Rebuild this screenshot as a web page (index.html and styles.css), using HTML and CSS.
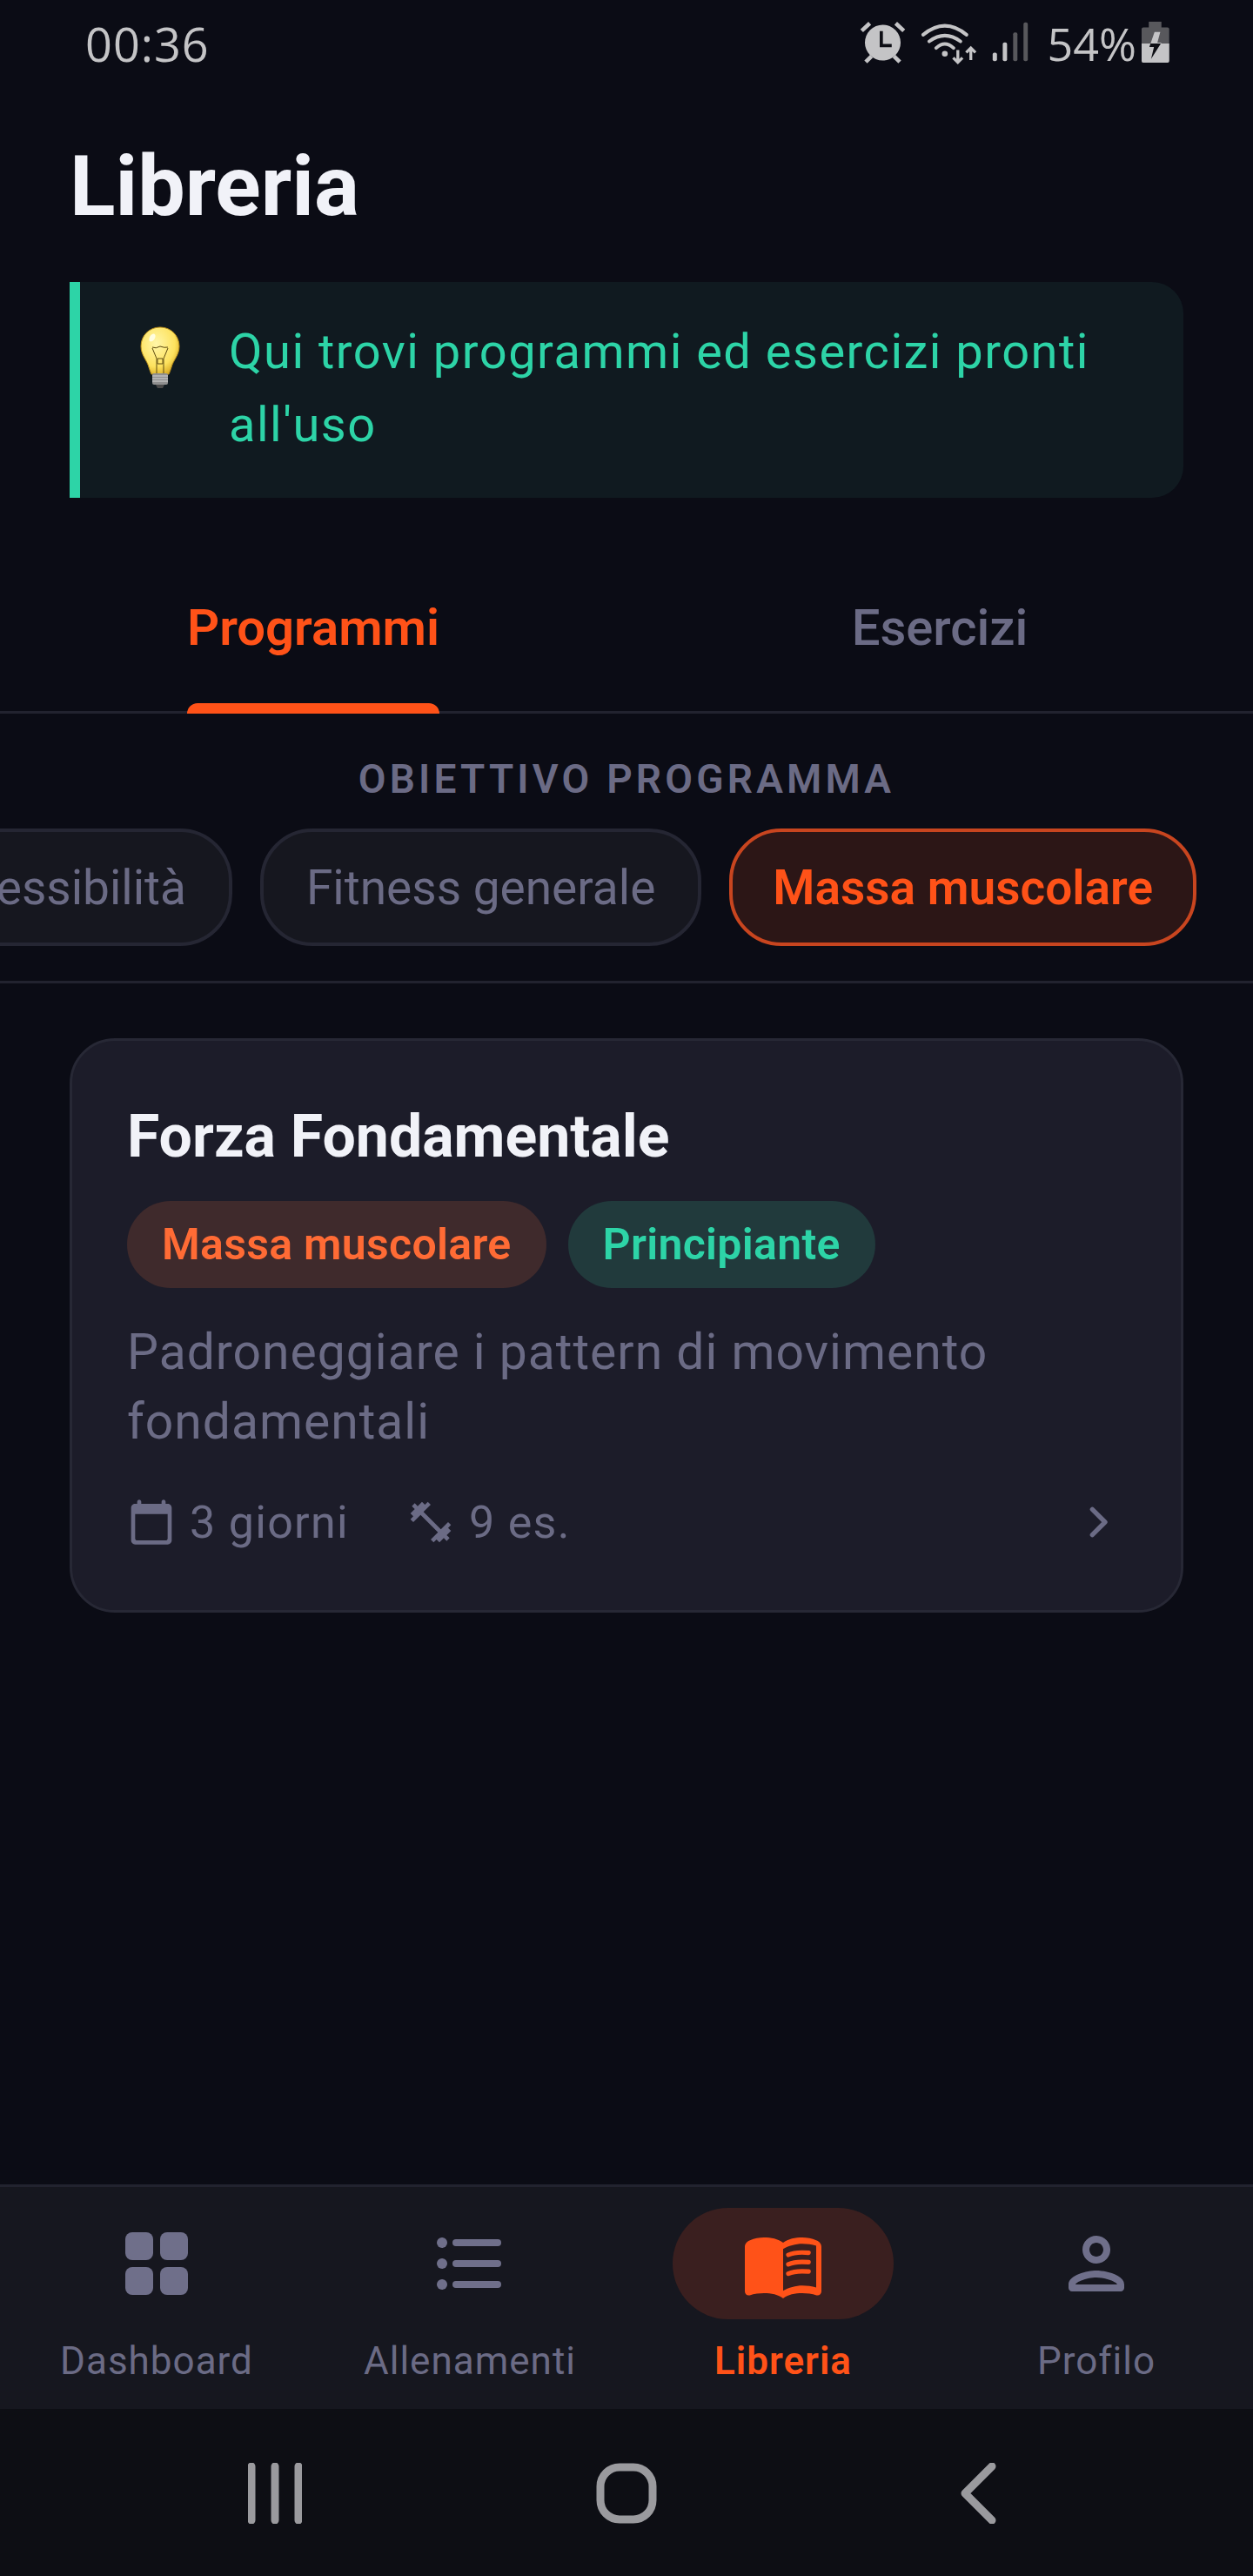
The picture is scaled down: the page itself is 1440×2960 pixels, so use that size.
FILE: index.html
```html
<!DOCTYPE html>
<html lang="it">

<head>
    <meta charset="UTF-8">
    <meta name="viewport" content="width=device-width, initial-scale=1.0">
    <title>Libreria</title>
    <link rel="stylesheet" href="styles.css">
</head>

<body>
    <div class="status-bar">
        <span class="status-time">00:36</span>
        <div class="status-icons">
            <svg class="ic-alarm" viewBox="85 70 160 150">
                <circle cx="165" cy="145" r="62" fill="#c4c4c6"/>
                <path d="M92 104 120 78M238 104 210 78M106 212 126 192M224 212 204 192" stroke="#c4c4c6" stroke-width="14" fill="none"/>
                <path d="M160 105V155H196" stroke="#0d0e14" stroke-width="11" fill="none"/>
            </svg>
            <svg class="ic-wifi" viewBox="285 65 205 155">
                <path d="M297 112Q372 50 447 112M318 135Q372 95 426 135M342 158Q372 130 402 158" stroke="#c4c4c6" stroke-width="12" fill="none" stroke-linecap="round"/>
                <circle cx="372" cy="178" r="10" fill="#c4c4c6"/>
                <path d="M417 165V208M401 192 417 208 433 192M462 200V158M446 174 462 158 478 174" stroke="#c4c4c6" stroke-width="10" fill="none"/>
            </svg>
            <svg class="ic-signal" viewBox="530 75 135 145">
                <rect x="535" y="185" width="15" height="30" rx="6" fill="#c4c4c6"/>
                <rect x="570" y="150" width="15" height="65" rx="6" fill="#c4c4c6"/>
                <rect x="606" y="115" width="15" height="100" rx="6" fill="#58585c"/>
                <rect x="642" y="80" width="15" height="135" rx="6" fill="#58585c"/>
            </svg>
            <span class="status-pct">54%</span>
            <svg class="ic-battery" viewBox="1050 70 100 150">
                <clipPath id="bolt-top"><rect x="1050" y="70" width="100" height="78"/></clipPath>
                <clipPath id="bolt-bottom"><rect x="1050" y="148" width="100" height="72"/></clipPath>
                <rect x="1078" y="72" width="44" height="24" fill="#58585c"/>
                <rect x="1053" y="92" width="96" height="123" rx="6" fill="#58585c"/>
                <path d="M1053 148H1149V209a6 6 0 0 1-6 6H1059a6 6 0 0 1-6-6z" fill="#c4c4c6"/>
                <path d="M1098 108H1118L1108 145H1122L1086 202 1096 160H1080z" fill="#c4c4c6" clip-path="url(#bolt-top)"/>
                <path d="M1098 108H1118L1108 145H1122L1086 202 1096 160H1080z" fill="#0d0e14" clip-path="url(#bolt-bottom)"/>
            </svg>
        </div>
    </div>

    <main class="content">
        <h1 class="page-title">Libreria</h1>

        <div class="tip">
            <svg class="tip-bulb" viewBox="0 0 46 72">
                <defs>
                    <radialGradient id="glass" cx="40%" cy="35%" r="70%">
                        <stop offset="0" stop-color="#fff6a8"/>
                        <stop offset="0.7" stop-color="#fde25e"/>
                        <stop offset="1" stop-color="#d9ab22"/>
                    </radialGradient>
                </defs>
                <path d="M23 1C10 1 1 11 1 23c0 10 7 16 9 24 1 3 2 6 3 8h20c1-2 2-5 3-8 2-8 9-14 9-24C45 11 36 1 23 1z" fill="url(#glass)" stroke="#b58c1c" stroke-width="1"/>
                <path d="M14 25 19 37V55M32 25 27 37V55M14 24q4 2 9-1 5 2 9 1M20 37h6v6h-6z" stroke="#5d4a10" stroke-width="1" fill="none"/>
                <ellipse cx="14" cy="13" rx="3" ry="5" fill="#fffde0" transform="rotate(30 14 13)"/>
                <rect x="14" y="54" width="18" height="13" rx="2" fill="#8f8f8f"/>
                <path d="M14 57H32M14 60H32M14 63H32" stroke="#d6d6d6" stroke-width="1.2"/>
                <path d="M18 67H28L26 71H20z" fill="#4a4a4a"/>
            </svg>
            <p class="tip-text">Qui trovi programmi ed esercizi pronti all'uso</p>
        </div>

        <div class="tabs">
            <div class="tab tab-active"><span class="tab-label">Programmi<i class="tab-line"></i></span></div>
            <div class="tab"><span class="tab-label">Esercizi</span></div>
        </div>

        <div class="filter">
            <div class="filter-title">OBIETTIVO PROGRAMMA</div>
            <div class="chips">
                <span class="chip">Flessibilità</span>
                <span class="chip">Fitness generale</span>
                <span class="chip chip-active">Massa muscolare</span>
            </div>
        </div>

        <div class="list">
            <div class="card">
                <div class="card-title">Forza Fondamentale</div>
                <div class="pills">
                    <span class="pill pill-orange">Massa muscolare</span>
                    <span class="pill pill-green">Principiante</span>
                </div>
                <p class="card-desc">Padroneggiare i pattern di movimento fondamentali</p>
                <div class="card-meta">
                    <svg class="meta-icon" viewBox="0 0 24 24"><path d="M20 3h-1V2c0-.55-.45-1-1-1s-1 .45-1 1v1H7V2c0-.55-.45-1-1-1s-1 .45-1 1v1H4c-1.1 0-2 .9-2 2v16c0 1.1.9 2 2 2h16c1.1 0 2-.9 2-2V5c0-1.1-.9-2-2-2zm-1 18H5c-.55 0-1-.45-1-1V8h16v12c0 .55-.45 1-1 1z"/></svg>
                    <span class="meta-text">3 giorni</span>
                    <svg class="meta-icon meta-icon-gap" viewBox="0 0 24 24"><path d="M20.57 14.86L22 13.43 20.57 12 17 15.57 8.43 7 12 3.43 10.57 2 9.14 3.43 7.71 2 5.57 4.14 4.14 2.71 2.71 4.14l1.43 1.43L2 7.71l1.43 1.43L2 10.57 3.43 12 7 8.43 15.57 17 12 20.57 13.43 22l1.43-1.43L16.29 22l2.14-2.14 1.43 1.43 1.43-1.43-1.43-1.43L22 16.29z"/></svg>
                    <span class="meta-text">9 es.</span>
                    <svg class="chevron" viewBox="0 0 24 24"><path d="M9.5 6.5 15 12l-5.5 5.5" fill="none" stroke-width="2" stroke-linecap="round" stroke-linejoin="round"/></svg>
                </div>
            </div>
        </div>
    </main>

    <nav class="bottom-nav">
        <div class="nav-item">
            <span class="nav-icon">
                <svg viewBox="0 0 24 24"><rect x="3" y="3" width="8" height="8" rx="2"/><rect x="13" y="3" width="8" height="8" rx="2"/><rect x="3" y="13" width="8" height="8" rx="2"/><rect x="13" y="13" width="8" height="8" rx="2"/></svg>
            </span>
            <span class="nav-label">Dashboard</span>
        </div>
        <div class="nav-item">
            <span class="nav-icon">
                <svg viewBox="0 0 24 24"><circle cx="4" cy="6" r="1.5"/><circle cx="4" cy="12" r="1.5"/><circle cx="4" cy="18" r="1.5"/><rect x="7" y="5" width="14" height="2" rx="1"/><rect x="7" y="11" width="14" height="2" rx="1"/><rect x="7" y="17" width="14" height="2" rx="1"/></svg>
            </span>
            <span class="nav-label">Allenamenti</span>
        </div>
        <div class="nav-item nav-item-active">
            <span class="nav-icon">
                <svg viewBox="0 0 24 24"><path d="M21.5 5.3c-1.2-.5-2.7-.8-4-.8-2 0-4.1.4-5.5 1.5-1.4-1.1-3.5-1.5-5.5-1.5-1.3 0-2.8.3-4 .8C1.6 5.6 1 6.3 1 7.2V20c0 .8.7 1.3 1.4 1.1 1.3-.4 2.8-.6 4.1-.6 2 0 4.2.4 5.5 1.5 1.3-1.1 3.5-1.5 5.5-1.5 1.3 0 2.8.2 4.1.6.7.2 1.4-.3 1.4-1.1V7.2c0-.9-.6-1.6-1.5-1.9zM21.5 18.9c-1.2-.4-2.6-.6-4-.6-1.8 0-4 .6-5.5 1.5V7.8c1.4-.9 3.7-1.5 5.5-1.5 1.4 0 2.8.2 4 .6z"/><path d="M13.5 9.5c1.3-.6 3.5-.8 5.8-.6M13.5 12.2c1.3-.6 3.5-.8 5.8-.6M13.5 14.9c1.3-.6 3.5-.8 5.8-.6" fill="none" stroke-width="1.3" stroke-linecap="round"/></svg>
            </span>
            <span class="nav-label">Libreria</span>
        </div>
        <div class="nav-item">
            <span class="nav-icon">
                <svg viewBox="0 0 24 24"><path d="M12 6c1.1 0 2 .9 2 2s-.9 2-2 2-2-.9-2-2 .9-2 2-2m0 10c2.7 0 5.8 1.29 6 2H6c.23-.72 3.31-2 6-2m0-12C9.79 4 8 5.79 8 8s1.79 4 4 4 4-1.79 4-4-1.79-4-4-4zm0 10c-2.67 0-8 1.34-8 4v1c0 .55.45 1 1 1h14c.55 0 1-.45 1-1v-1c0-2.66-5.33-4-8-4z"/></svg>
            </span>
            <span class="nav-label">Profilo</span>
        </div>
    </nav>

    <div class="system-nav">
        <svg class="sys-icon" viewBox="0 0 62 70"><path d="M4 4V66M31 4V66M58 4V66"/></svg>
        <svg class="sys-icon" viewBox="0 0 70 70"><rect x="5" y="5" width="60" height="60" rx="22"/></svg>
        <svg class="sys-icon" viewBox="0 0 42 70"><path d="M37 4 6 35l31 31"/></svg>
    </div>
</body>

</html>
```

FILE: styles.css
```css
* {
    margin: 0;
    padding: 0;
    box-sizing: border-box;
}

body {
    width: 1440px;
    height: 2960px;
    display: flex;
    flex-direction: column;
    background-color: #0b0c15;
    font-family: Roboto, "Liberation Sans", sans-serif;
    color: #6b6b85;
    overflow: hidden;
}

/* status bar */
.status-bar {
    height: 100px;
    flex-shrink: 0;
    display: flex;
    justify-content: space-between;
    padding: 22px 96px 0 98px;
    color: #c4c4c6;
}

.status-time {
    font-family: "Open Sans", sans-serif;
    font-size: 54px;
    line-height: 56px;
    letter-spacing: 1px;
}

.status-icons {
    display: flex;
    align-items: flex-start;
    padding-top: 2px;
}

.status-pct {
    font-family: "Open Sans", sans-serif;
    font-size: 52px;
    line-height: 52px;
    margin: 0 5px 0 20px;
}

.ic-alarm {
    width: 53px;
    height: 50px;
}

.ic-wifi {
    width: 68px;
    height: 52px;
    margin-left: 16px;
}

.ic-signal {
    width: 45px;
    height: 48px;
    margin-left: 14px;
}

.ic-battery {
    width: 33px;
    height: 50px;
}

/* page */
.content {
    flex: 1;
    min-height: 0;
    display: flex;
    flex-direction: column;
}

.page-title {
    font-size: 97px;
    font-weight: 700;
    line-height: 100px;
    color: #f1f2f8;
    margin: 64px 80px 60px;
}

.tip {
    margin: 0 80px;
    height: 248px;
    display: flex;
    align-items: flex-start;
    padding: 50px 40px 0 69px;
    background-color: #101a20;
    border-left: 12px solid #2dd4a7;
    border-radius: 0 36px 36px 0;
}

.tip-bulb {
    width: 46px;
    height: 72px;
    flex-shrink: 0;
    margin-top: 1px;
    margin-right: 56px;
}

.tip-text {
    font-size: 56px;
    line-height: 84px;
    margin-top: -12px;
    color: #2dd4a7;
    letter-spacing: 1.5px;
}

/* tabs */
.tabs {
    height: 248px;
    display: flex;
    border-bottom: 3px solid #22232f;
}

.tab {
    flex: 1;
    display: flex;
    justify-content: center;
    align-items: flex-end;
    margin-bottom: -3px;
    font-size: 58px;
    font-weight: 500;
}

.tab-label {
    position: relative;
    height: 132px;
    line-height: 66px;
}

.tab-active {
    color: #ff5218;
    font-weight: 600;
}

.tab-line {
    position: absolute;
    left: 0;
    right: 0;
    bottom: 0;
    height: 12px;
    background-color: #ff5218;
    border-radius: 12px 12px 0 0;
}

/* filter */
.filter {
    height: 310px;
    padding-top: 50px;
    border-bottom: 3px solid #22232f;
    flex-shrink: 0;
}

.filter-title {
    text-align: center;
    font-size: 46px;
    font-weight: 600;
    line-height: 50px;
    letter-spacing: 4.2px;
}

.chips {
    display: flex;
    justify-content: flex-end;
    gap: 32px;
    margin-top: 32px;
    padding-right: 65px;
    overflow: hidden;
}

.chip {
    flex-shrink: 0;
    height: 135px;
    padding: 0 49px;
    display: flex;
    align-items: center;
    font-size: 55px;
    background-color: #16171f;
    border: 4px solid #252633;
    border-radius: 60px;
}

.chip-active {
    padding: 0 46px;
    font-weight: 600;
    color: #ff5218;
    background-color: #2c1616;
    border-color: #c8451f;
}

/* card */
.list {
    padding: 63px 80px 0;
}

.card {
    height: 660px;
    padding: 70px 63px 0;
    background-color: #1c1c29;
    border: 3px solid #272835;
    border-radius: 52px;
}

.card-title {
    font-size: 68px;
    font-weight: 700;
    line-height: 80px;
    color: #f1f2f8;
}

.pills {
    display: flex;
    gap: 25px;
    margin-top: 34px;
}

.pill {
    height: 100px;
    padding: 0 40px;
    display: flex;
    align-items: center;
    font-size: 50px;
    font-weight: 600;
    letter-spacing: .3px;
    border-radius: 50px;
}

.pill-orange {
    color: #ff6b35;
    background-color: #3f2a2c;
}

.pill-green {
    color: #2dd4a7;
    background-color: #213a3c;
}

.card-desc {
    font-size: 57px;
    line-height: 80px;
    margin-top: 34px;
    letter-spacing: 1px;
}

.card-meta {
    display: flex;
    align-items: center;
    margin-top: 45px;
    height: 60px;
}

.meta-icon {
    width: 56px;
    height: 56px;
    fill: #6b6b85;
}

.meta-icon-gap {
    margin-left: 66px;
}

.meta-text {
    font-size: 52px;
    margin-left: 16px;
    letter-spacing: 1.3px;
}

.chevron {
    width: 64px;
    height: 64px;
    margin-left: auto;
    stroke: #6b6b85;
}

/* bottom navigation */
.bottom-nav {
    height: 258px;
    flex-shrink: 0;
    display: flex;
    padding-top: 24px;
    background-color: #16171f;
    border-top: 3px solid #22232f;
}

.nav-item {
    width: 360px;
    display: flex;
    flex-direction: column;
    align-items: center;
}

.nav-icon {
    width: 254px;
    height: 128px;
    display: flex;
    align-items: center;
    justify-content: center;
    border-radius: 64px;
}

.nav-icon svg {
    width: 96px;
    height: 96px;
    fill: #6f6f8a;
}

.nav-label {
    font-size: 44px;
    line-height: 60px;
    margin-top: 18px;
    letter-spacing: 1px;
}

.nav-item-active .nav-icon {
    background-color: #3a1f1f;
}

.nav-item-active .nav-icon svg {
    fill: #ff5218;
    stroke: #ff5218;
    stroke-width: 0;
}

.nav-item-active .nav-icon svg path + path {
    stroke-width: 1.3;
}

.nav-item-active .nav-label {
    color: #ff5218;
    font-weight: 600;
}

/* android buttons */
.system-nav {
    height: 192px;
    flex-shrink: 0;
    display: grid;
    grid-template-columns: repeat(3, 404px);
    justify-content: center;
    justify-items: center;
    padding-top: 62px;
    background-color: #0d0e14;
}

.sys-icon {
    height: 70px;
    fill: none;
    stroke: #9a9a9e;
    stroke-width: 9;
    stroke-linecap: round;
    stroke-linejoin: round;
}
```
